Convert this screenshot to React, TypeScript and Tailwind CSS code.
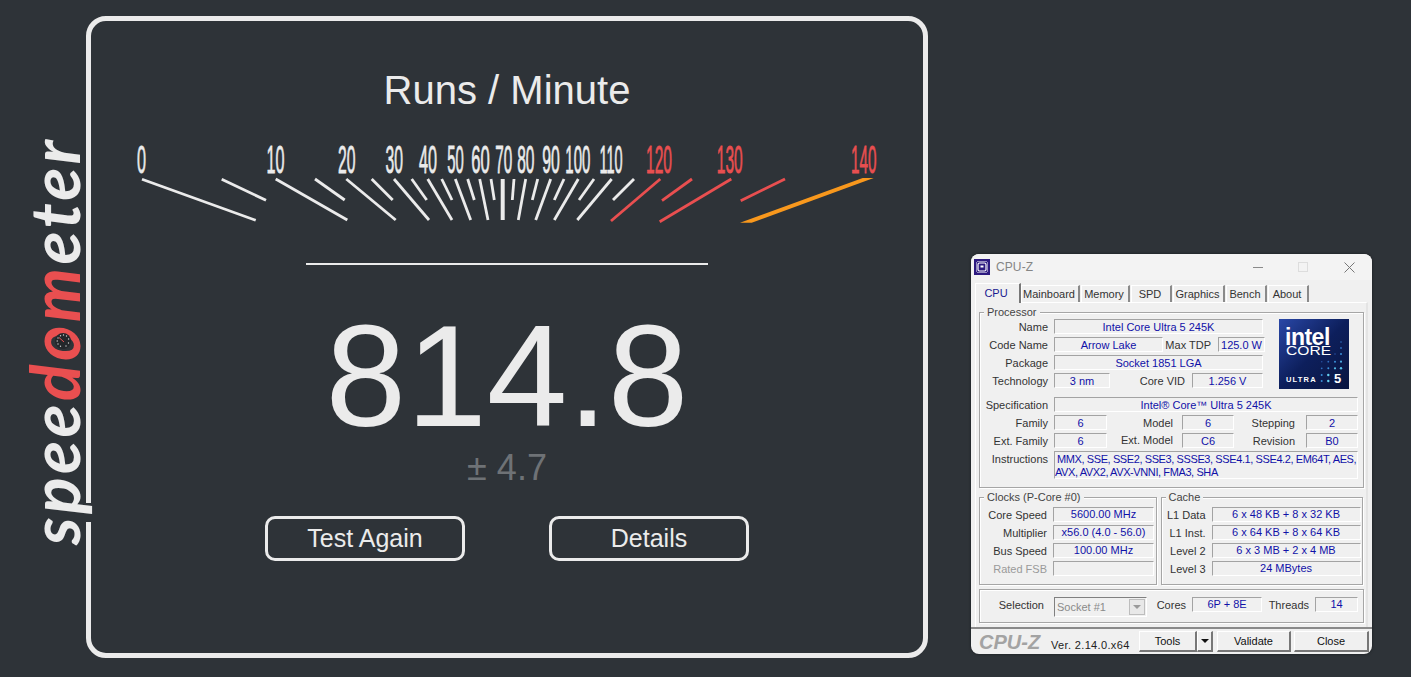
import React from "react";

const ticks: [number, number, number, number, string?, number?][] = [
  [142, 179.3, 255.7, 220.3],
  [221.7, 179.3, 266, 200.3],
  [275.7, 179, 347.3, 220],
  [315, 179, 344.7, 200],
  [346.3, 179, 395.7, 220],
  [371.7, 179, 392.7, 200],
  [394, 179, 429, 220],
  [411.7, 179, 426.7, 200],
  [427.7, 179, 452, 220],
  [441.7, 179, 452, 200],
  [455.3, 179, 470.7, 220],
  [467.7, 179, 474.3, 200],
  [479.7, 179, 488, 220],
  [491, 179, 494.3, 200],
  [502.7, 179, 502.7, 220, "#ebebeb", 4],
  [514, 179, 512.3, 200],
  [525.7, 179, 518.3, 220],
  [537.7, 179, 532.3, 200],
  [550.7, 179, 535.7, 220],
  [564, 179, 554.3, 200],
  [578.3, 179, 554.3, 220],
  [594, 179, 579, 200],
  [611.7, 179, 577.3, 220],
  [634, 179, 613, 200],
  [660.3, 179, 611, 221, "#e94f50"],
  [692, 179, 662, 200.7, "#e94f50"],
  [731.3, 179, 659.7, 221.7, "#e94f50"],
  [785, 179, 740.7, 200.7, "#e94f50"],
];

const labels: [string, number, number, string?][] = [
  ["0", 137, 9],
  ["10", 266.5, 18],
  ["20", 338, 17.5],
  ["30", 385.5, 17.5],
  ["40", 419, 18],
  ["50", 447.2, 16.5],
  ["60", 471.2, 18.5],
  ["70", 495.2, 17],
  ["80", 517.2, 17.3],
  ["90", 542.2, 17.6],
  ["100", 565.3, 25],
  ["110", 599.5, 24.2],
  ["120", 646, 26, "#e94f50"],
  ["130", 716.8, 26, "#e94f50"],
  ["140", 851, 25.5, "#e94f50"],
];

function Gauge() {
  return (
    <svg className="mt-[18px] block w-[832px] h-[100px]" viewBox="91 130 832 100">
      {labels.map(([t, x, w, c]) => (
        <text
          key={t}
          transform={`translate(${x} 172.7) scale(${w / (t.length * 21.7)} 1)`}
          fontSize={39}
          fontFamily="'Liberation Sans', sans-serif"
          fill={c || "#ebebeb"}
          stroke={c || "#ebebeb"}
          strokeWidth={0.6}
          vectorEffect="non-scaling-stroke"
        >
          {t}
        </text>
      ))}
      {ticks.map(([a, b, c, d, col, sw], i) => (
        <line key={i} x1={a} y1={b} x2={c} y2={d} stroke={col || "#ebebeb"} strokeWidth={sw || 2.8} />
      ))}
      <polygon points="862.7,178 873.7,178 751.7,222.7 740,222.7" fill="#f8981d" />
    </svg>
  );
}

function Logo() {
  return (
    <>
      <div className="absolute left-[84px] top-[503px] w-[9px] h-[19px] bg-[#2e3338]" />
      <div className="absolute left-[80px] top-[545px] origin-top-left -rotate-90 whitespace-nowrap font-['Lato',sans-serif] italic text-[68px] leading-[68px] h-[0px] tracking-[3.4px] text-[#ebebeb] font-bold">
        <div className="-translate-y-[60px]">
          spee<span className="text-[#e94f50]">dom</span>eter
        </div>
      </div>
      <svg className="absolute left-[55px] top-[333px] w-[16px] h-[16px]" viewBox="0 0 16 16">
        <circle cx="8" cy="8" r="8" fill="#23272b" />
        <g fill="#cfcfcf">
          <circle cx="3" cy="5" r="0.7" />
          <circle cx="2.2" cy="8" r="0.7" />
          <circle cx="3" cy="11" r="0.7" />
          <circle cx="5.5" cy="13.3" r="0.7" />
          <circle cx="5.5" cy="2.8" r="0.7" />
          <circle cx="8.5" cy="2" r="0.7" />
          <circle cx="11.5" cy="3" r="0.7" />
          <circle cx="13.6" cy="6" r="0.7" />
          <circle cx="13.5" cy="10" r="0.7" />
          <circle cx="11" cy="13" r="0.7" />
        </g>
        <line x1="4" y1="4.5" x2="9" y2="9" stroke="#e94f50" strokeWidth="1" />
      </svg>
    </>
  );
}

function L({ w, children, dim, pt = "pt-[2px]" }: { w: string; children: React.ReactNode; dim?: boolean; pt?: string }) {
  return (
    <div className={`${w} ${pt} shrink-0 text-right whitespace-nowrap ${dim ? "text-[#9a9a9a]" : "text-[#333333]"}`}>{children}</div>
  );
}

function F({ w, children }: { w: string; children?: React.ReactNode }) {
  return (
    <div
      className={`${w} h-[15px] shrink-0 flex items-center justify-center whitespace-nowrap text-[#1010a8] border-t border-l border-t-[#a3a3a3] border-l-[#a3a3a3] border-r border-b border-r-white border-b-white`}
    >
      {children}
    </div>
  );
}

function Row({ children, className = "" }: { children: React.ReactNode; className?: string }) {
  return <div className={`flex items-center h-[15px] ${className}`}>{children}</div>;
}

function Group({ label, className, children }: { label?: string; className: string; children: React.ReactNode }) {
  return (
    <div className={`relative border border-[#a6a6a6] shadow-[inset_1px_1px_0_#ffffff,1px_1px_0_#ffffff] ${className}`}>
      {label && (
        <div className="absolute left-[4px] -top-[8px] h-[14px] px-[3px] bg-[#f0f0f0] leading-[14px] text-[#444444]">{label}</div>
      )}
      {children}
    </div>
  );
}

function Tab({ w, children, active }: { w: string; children: React.ReactNode; active?: boolean }) {
  return (
    <div
      className={
        active
          ? `${w} relative z-10 h-[20px] -mb-[1px] pr-[3px] flex items-center justify-center bg-[#f0f0f0] text-[#1a1a90] border-t border-l border-t-white border-l-white border-r-2 border-r-[#777777]`
          : `${w} h-[17px] pr-[2px] flex items-center justify-center text-[#333333] border-t border-l border-t-white border-l-white border-r-2 border-r-[#8a8a8a]`
      }
    >
      {children}
    </div>
  );
}

function Btn({ w, children, className = "" }: { w: string; children?: React.ReactNode; className?: string }) {
  return (
    <div
      className={`${w} h-[21px] flex items-center justify-center text-[#111111] bg-[#f0f0f0] border-t border-l border-t-white border-l-white border-r-2 border-b-2 border-r-[#777777] border-b-[#777777] ${className}`}
    >
      {children}
    </div>
  );
}

function IntelLogo() {
  const dots: [number, number, string, number][] = [
    [62, 23, "#2f6fc0", 0.8],
    [62, 29, "#2f6fc0", 0.9],
    [62, 35, "#3a8fd8", 1],
    [62, 42.7, "#4aa8e0", 1.1],
    [62, 49.3, "#55c0ea", 1.2],
    [56, 35, "#274f9f", 0.8],
    [56, 42.7, "#3a8fd8", 1],
    [56, 49.3, "#55c0ea", 1.1],
    [49.3, 42.7, "#2f6fc0", 0.9],
    [49.3, 49.3, "#3a8fd8", 1],
    [42.7, 42.7, "#274f9f", 0.8],
    [42.7, 49.3, "#2f6fc0", 0.9],
    [49.3, 56, "#66d0f0", 1.2],
    [49.3, 62, "#66d0f0", 1.2],
    [42.7, 56, "#3a8fd8", 1],
    [42.7, 62, "#3a8fd8", 1],
  ];
  return (
    <div className="relative w-[70px] h-[70px] shrink-0 ml-[14px] overflow-hidden bg-gradient-to-br from-[#2a48a8] via-[#0d1f5c] to-[#0a1540] font-['Liberation_Sans',sans-serif] text-white">
      <div className="absolute left-[6px] top-[9px] h-[18px] text-[23px] font-bold leading-[18px] tracking-[-0.5px]">intel</div>
      <div className="absolute left-[7px] top-[27px] h-[9px] text-[13px] leading-[9px] scale-x-[1.2] origin-left">CORE</div>
      <div className="absolute left-[7px] top-[56px] text-[7.5px] font-bold leading-[9px] tracking-[1.2px]">ULTRA</div>
      <div className="absolute left-[55px] top-[52px] text-[13px] font-bold leading-[15px]">5</div>
      <svg className="absolute inset-0 w-[70px] h-[70px]" viewBox="0 0 70 70">
        {dots.map(([x, y, c, r], i) => (
          <circle key={i} cx={x} cy={y} r={r} fill={c} />
        ))}
      </svg>
    </div>
  );
}

function CpuZ() {
  return (
    <div className="w-[401px] h-[400px] ml-[43px] mt-[238px] shrink-0 rounded-[8px] overflow-hidden bg-[#f0f0f0] shadow-[0_0_3px_rgba(0,0,0,0.5)] text-[11px] leading-[15px] font-['Liberation_Sans',sans-serif]">
      <div className="h-[26px] bg-[#f3f3f3] flex items-center pl-[3px]">
        <svg className="w-[16px] h-[16px] shrink-0" viewBox="0 0 16 16">
          <rect width="16" height="16" fill="#2d1a80" />
          <rect x="4" y="4" width="8" height="8" rx="1.5" fill="none" stroke="#ffffff" strokeWidth="1.2" />
          <rect x="6.5" y="6.5" width="3" height="2" fill="#ffffff" />
          <path d="M4 2v1M6 2v1M8 2v1M10 2v1M12 2v1M4 13v1M6 13v1M8 13v1M10 13v1M12 13v1M2 4h1M2 6h1M2 8h1M2 10h1M2 12h1M13 4h1M13 6h1M13 8h1M13 10h1M13 12h1" stroke="#ffffff" strokeWidth="1" />
        </svg>
        <div className="ml-[6px] text-[12px] text-[#858585] tracking-[0.1px]">CPU-Z</div>
        <div className="ml-auto flex items-center">
          <div className="w-[10px] h-[1px] bg-[#8a8a8a] mr-[35px]" />
          <div className="w-[10px] h-[10px] border border-[#dddddd] mr-[36px]" />
          <svg className="w-[11px] h-[11px] mr-[17px]" viewBox="0 0 11 11">
            <path d="M0.5 0.5l10 10M10.5 0.5l-10 10" stroke="#777777" strokeWidth="1" />
          </svg>
        </div>
      </div>

      <div className="mt-[3px] pl-[4px] flex items-end h-[19px]">
        <Tab w="w-[46px]" active>CPU</Tab>
        <Tab w="w-[59px] mr-[1px]">Mainboard</Tab>
        <Tab w="w-[49px] mr-[1px]">Memory</Tab>
        <Tab w="w-[41px] mr-[1px]">SPD</Tab>
        <Tab w="w-[52px] mr-[1px]">Graphics</Tab>
        <Tab w="w-[41px] mr-[1px]">Bench</Tab>
        <Tab w="w-[41px]">About</Tab>
      </div>

      <div className="ml-[4px] w-[393px] h-[325px] border-t border-l border-t-white border-l-white border-r-2 border-r-[#e4e4e4] px-[3px]">
        <Group label="Processor" className="mt-[9px] w-[385px] h-[176px] pt-[6px]">
          <div className="flex">
            <div className="flex flex-col gap-[3px] w-[285px]">
              <Row>
                <L w="w-[68px]">Name</L>
                <F w="w-[209px] ml-[6px] pt-[1px]">Intel Core Ultra 5 245K</F>
              </Row>
              <Row>
                <L w="w-[68px]">Code Name</L>
                <F w="w-[109px] ml-[6px] pt-[1px]">Arrow Lake</F>
                <L w="w-[48px]">Max TDP</L>
                <F w="w-[47px] ml-[7px] pt-[1px]">125.0 W</F>
              </Row>
              <Row>
                <L w="w-[68px]">Package</L>
                <F w="w-[209px] ml-[6px] pt-[1px]">Socket 1851 LGA</F>
              </Row>
              <Row>
                <L w="w-[68px]">Technology</L>
                <F w="w-[56px] ml-[6px] pt-[1px]">3 nm</F>
                <L w="w-[75px]">Core VID</L>
                <F w="w-[71px] ml-[7px] pt-[1px]">1.256 V</F>
              </Row>
            </div>
            <IntelLogo />
          </div>
          <div className="mt-[8px] flex flex-col gap-[3px]">
            <Row>
              <L w="w-[68px]">Specification</L>
              <F w="w-[304px] ml-[6px] pt-[1px]">Intel® Core™ Ultra 5 245K</F>
            </Row>
            <Row>
              <L w="w-[68px]">Family</L>
              <F w="w-[53px] ml-[6px] pt-[1px]">6</F>
              <L w="w-[66px]">Model</L>
              <F w="w-[52px] ml-[9px] pt-[1px]">6</F>
              <L w="w-[61px]">Stepping</L>
              <F w="w-[52px] ml-[11px] pt-[1px]">2</F>
            </Row>
            <Row>
              <L w="w-[68px]">Ext. Family</L>
              <F w="w-[53px] ml-[6px] pt-[1px]">6</F>
              <L w="w-[66px]" pt="pt-0">Ext. Model</L>
              <F w="w-[52px] ml-[9px] pt-[1px]">C6</F>
              <L w="w-[61px]">Revision</L>
              <F w="w-[52px] ml-[11px] pt-[1px]">B0</F>
            </Row>
            <div className="flex h-[28px]">
              <L w="w-[68px]" pt="pt-[1px]">Instructions</L>
              <div className="w-[304px] ml-[6px] h-[28px] pt-[1px] text-[#1010a8] leading-[13px] tracking-[-0.4px] border-t border-l border-t-[#a3a3a3] border-l-[#a3a3a3] border-r border-b border-r-white border-b-white whitespace-nowrap">
                <div className="pl-[2px]">MMX, SSE, SSE2, SSE3, SSSE3, SSE4.1, SSE4.2, EM64T, AES,</div>
                <div>AVX, AVX2, AVX-VNNI, FMA3, SHA</div>
              </div>
            </div>
          </div>
        </Group>

        <div className="flex mt-[9px] gap-[4px]">
          <Group label="Clocks (P-Core #0)" className="w-[178px] h-[88px] pt-[9px]">
            <div className="flex flex-col gap-[3px]">
              <Row>
                <L w="w-[67px]" pt="pt-[1px]">Core Speed</L>
                <F w="w-[101px] ml-[6px]">5600.00 MHz</F>
              </Row>
              <Row>
                <L w="w-[67px]" pt="pt-[1px]">Multiplier</L>
                <F w="w-[101px] ml-[6px]">x56.0 (4.0 - 56.0)</F>
              </Row>
              <Row>
                <L w="w-[67px]" pt="pt-[1px]">Bus Speed</L>
                <F w="w-[101px] ml-[6px]">100.00 MHz</F>
              </Row>
              <Row>
                <L w="w-[67px]" pt="pt-[1px]" dim>Rated FSB</L>
                <F w="w-[101px] ml-[6px]" />
              </Row>
            </div>
          </Group>
          <Group label="Cache" className="w-[203px] h-[88px] pt-[9px]">
            <div className="flex flex-col gap-[3px]">
              <Row>
                <L w="w-[44px]" pt="pt-[1px]">L1 Data</L>
                <F w="w-[149px] ml-[6px]">6 x 48 KB + 8 x 32 KB</F>
              </Row>
              <Row>
                <L w="w-[44px]" pt="pt-[1px]">L1 Inst.</L>
                <F w="w-[149px] ml-[6px]">6 x 64 KB + 8 x 64 KB</F>
              </Row>
              <Row>
                <L w="w-[44px]" pt="pt-[1px]">Level 2</L>
                <F w="w-[149px] ml-[6px]">6 x 3 MB + 2 x 4 MB</F>
              </Row>
              <Row>
                <L w="w-[44px]" pt="pt-[1px]">Level 3</L>
                <F w="w-[149px] ml-[6px]">24 MBytes</F>
              </Row>
            </div>
          </Group>
        </div>

        <Group className="mt-[4px] w-[385px] h-[34px] pt-[7px]">
          <Row>
            <L w="w-[64px]">Selection</L>
            <div className="w-[93px] h-[20px] ml-[10px] mt-[5px] shrink-0 flex items-center justify-between pl-[2px] text-[#8a8a8a] bg-[#f0f0f0] border-t border-l border-t-[#808080] border-l-[#808080] border-r border-b border-r-white border-b-white">
              Socket #1
              <div className="w-[16px] h-[16px] mr-[1px] flex items-center justify-center bg-[#e8e8e8] border border-[#bdbdbd]">
                <div className="w-0 h-0 border-l-[4px] border-r-[4px] border-t-[4px] border-l-transparent border-r-transparent border-t-[#9a9a9a]" />
              </div>
            </div>
            <L w="w-[39px]">Cores</L>
            <F w="w-[70px] ml-[6px]">6P + 8E</F>
            <L w="w-[47px]">Threads</L>
            <F w="w-[43px] ml-[6px]">14</F>
          </Row>
        </Group>
      </div>

      <div className="h-[28px] border-t-2 border-t-[#8a8a8a] flex pl-[8px]">
        <div className="w-[60px] mt-[2px] text-[20px] leading-[22px] font-bold italic text-[#a3a3a3] whitespace-nowrap">CPU-Z</div>
        <div className="w-[78px] ml-[12px] mt-[9px] text-[#222222] whitespace-nowrap tracking-[0.35px]">Ver. 2.14.0.x64</div>
        <div className="ml-[10px] mt-[2px] flex">
          <Btn w="w-[58px]">Tools</Btn>
          <Btn w="w-[16px]">
            <div className="w-0 h-0 border-l-[4px] border-r-[4px] border-t-[4px] border-l-transparent border-r-transparent border-t-[#111111]" />
          </Btn>
          <Btn w="w-[74px] ml-[4px]">Validate</Btn>
          <Btn w="w-[75px] ml-[3px]">Close</Btn>
        </div>
      </div>
    </div>
  );
}

export default function App() {
  return (
    <div className="relative w-[1411px] h-[677px] overflow-hidden bg-[#2e3338] flex items-start pl-[86px] pt-[16px] font-['Liberation_Sans',Arial,sans-serif] text-[#ebebeb]">
      <div className="w-[842px] h-[642px] shrink-0 border-[5px] border-[#ebebeb] rounded-[20px] flex flex-col items-center">
        <div className="mt-[47px] h-[44px] text-[40px] leading-[44px] whitespace-nowrap">Runs / Minute</div>
        <Gauge />
        <div className="mt-[33px] w-[402px] h-[2px] bg-[#ebebeb]" />
        <div className="mt-[39px] h-[146px] text-[145px] leading-[145px] whitespace-nowrap">814.8</div>
        <div className="h-[36px] text-[36px] leading-[36px] text-[#6e7276] whitespace-nowrap">± 4.7</div>
        <div className="mt-[30px] flex gap-[84px]">
          <div className="w-[200px] h-[45px] flex items-center justify-center border-[3px] border-[#ebebeb] rounded-[10px] text-[25px]">Test Again</div>
          <div className="w-[200px] h-[45px] flex items-center justify-center border-[3px] border-[#ebebeb] rounded-[10px] text-[25px]">Details</div>
        </div>
      </div>
      <CpuZ />
      <Logo />
    </div>
  );
}
